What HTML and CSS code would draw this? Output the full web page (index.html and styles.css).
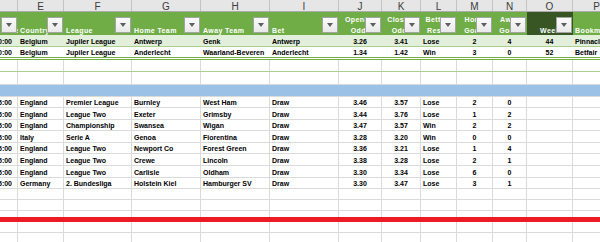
FILE: index.html
```html
<!DOCTYPE html>
<html>
<head>
<meta charset="utf-8">
<link rel="stylesheet" href="styles.css">
</head>
<body>
<div class="sheet">
  <div class="row letters">
    <div class="c"></div><div class="c">E</div><div class="c">F</div><div class="c">G</div><div class="c">H</div><div class="c">I</div><div class="c">J</div><div class="c">K</div><div class="c">L</div><div class="c">M</div><div class="c">N</div><div class="c">O</div><div class="c">P</div>
  </div>
  <div class="row hdr">
    <div class="c h"><span class="ht">Date</span><span class="fb"></span></div>
    <div class="c h"><span class="ht">Country</span><span class="fb"></span></div>
    <div class="c h"><span class="ht">League</span><span class="fb"></span></div>
    <div class="c h"><span class="ht">Home Team</span><span class="fb"></span></div>
    <div class="c h"><span class="ht">Away Team</span><span class="fb"></span></div>
    <div class="c h"><span class="ht">Bet</span><span class="fb"></span></div>
    <div class="c h hc"><span class="ht">Opening<br>Odds</span><span class="fb"></span></div>
    <div class="c h hc"><span class="ht">Closing<br>Odds</span><span class="fb"></span></div>
    <div class="c h hc"><span class="ht">Betting<br>Result</span><span class="fb"></span></div>
    <div class="c h hc"><span class="ht">Home<br>Goals</span><span class="fb"></span></div>
    <div class="c h hc"><span class="ht">Away<br>Goals</span><span class="fb"></span></div>
    <div class="c h hc dk"><span class="ht">Week</span><span class="fb"></span></div>
    <div class="c h"><span class="ht">Bookmaker</span></div>
  </div>
  <div class="row t1 h12">
    <div class="c d">20:00</div><div class="c">Belgium</div><div class="c">Jupiler League</div><div class="c">Antwerp</div><div class="c">Genk</div><div class="c">Antwerp</div><div class="c m">3.26</div><div class="c m">3.41</div><div class="c">Lose</div><div class="c m">2</div><div class="c m">4</div><div class="c m">44</div><div class="c">Pinnacle</div>
  </div>
  <div class="row t2">
    <div class="c d">20:00</div><div class="c">Belgium</div><div class="c">Jupiler League</div><div class="c">Anderlecht</div><div class="c">Waarland-Beveren</div><div class="c">Anderlecht</div><div class="c m">1.34</div><div class="c m">1.42</div><div class="c">Win</div><div class="c m">3</div><div class="c m">0</div><div class="c m">52</div><div class="c">Betfair</div>
  </div>
  <div class="row h12 gl">
    <div class="c"></div><div class="c"></div><div class="c"></div><div class="c"></div><div class="c"></div><div class="c"></div><div class="c"></div><div class="c"></div><div class="c"></div><div class="c"></div><div class="c"></div><div class="c"></div><div class="c"></div>
  </div>
  <div class="row h13">
    <div class="c"></div><div class="c"></div><div class="c"></div><div class="c"></div><div class="c"></div><div class="c"></div><div class="c"></div><div class="c"></div><div class="c"></div><div class="c"></div><div class="c"></div><div class="c"></div><div class="c"></div>
  </div>
  <div class="row h12 blue">
    <div class="c"></div><div class="c"></div><div class="c"></div><div class="c"></div><div class="c"></div><div class="c"></div><div class="c"></div><div class="c"></div><div class="c"></div><div class="c"></div><div class="c"></div><div class="c"></div><div class="c"></div>
  </div>
  <div class="row h11">
    <div class="c d">15:00</div><div class="c">England</div><div class="c">Premier League</div><div class="c">Burnley</div><div class="c">West Ham</div><div class="c">Draw</div><div class="c m">3.46</div><div class="c m">3.57</div><div class="c">Lose</div><div class="c m">2</div><div class="c m">0</div><div class="c"></div><div class="c"></div>
  </div>
  <div class="row h12">
    <div class="c d">15:00</div><div class="c">England</div><div class="c">League Two</div><div class="c">Exeter</div><div class="c">Grimsby</div><div class="c">Draw</div><div class="c m">3.44</div><div class="c m">3.76</div><div class="c">Lose</div><div class="c m">1</div><div class="c m">2</div><div class="c"></div><div class="c"></div>
  </div>
  <div class="row h11">
    <div class="c d">15:00</div><div class="c">England</div><div class="c">Championship</div><div class="c">Swansea</div><div class="c">Wigan</div><div class="c">Draw</div><div class="c m">3.47</div><div class="c m">3.57</div><div class="c">Win</div><div class="c m">2</div><div class="c m">2</div><div class="c"></div><div class="c"></div>
  </div>
  <div class="row h12">
    <div class="c d">15:00</div><div class="c">Italy</div><div class="c">Serie A</div><div class="c">Genoa</div><div class="c">Fiorentina</div><div class="c">Draw</div><div class="c m">3.28</div><div class="c m">3.20</div><div class="c">Win</div><div class="c m">0</div><div class="c m">0</div><div class="c"></div><div class="c"></div>
  </div>
  <div class="row h11">
    <div class="c d">15:00</div><div class="c">England</div><div class="c">League Two</div><div class="c">Newport Co</div><div class="c">Forest Green</div><div class="c">Draw</div><div class="c m">3.36</div><div class="c m">3.21</div><div class="c">Lose</div><div class="c m">1</div><div class="c m">4</div><div class="c"></div><div class="c"></div>
  </div>
  <div class="row h12">
    <div class="c d">15:00</div><div class="c">England</div><div class="c">League Two</div><div class="c">Crewe</div><div class="c">Lincoln</div><div class="c">Draw</div><div class="c m">3.38</div><div class="c m">3.28</div><div class="c">Lose</div><div class="c m">2</div><div class="c m">1</div><div class="c"></div><div class="c"></div>
  </div>
  <div class="row h12">
    <div class="c d">15:00</div><div class="c">England</div><div class="c">League Two</div><div class="c">Carlisle</div><div class="c">Oldham</div><div class="c">Draw</div><div class="c m">3.30</div><div class="c m">3.34</div><div class="c">Lose</div><div class="c m">6</div><div class="c m">0</div><div class="c"></div><div class="c"></div>
  </div>
  <div class="row h11">
    <div class="c d">15:00</div><div class="c">Germany</div><div class="c">2. Bundesliga</div><div class="c">Holstein Kiel</div><div class="c">Hamburger SV</div><div class="c">Draw</div><div class="c m">3.30</div><div class="c m">3.47</div><div class="c">Lose</div><div class="c m">3</div><div class="c m">1</div><div class="c"></div><div class="c"></div>
  </div>
  <div class="row h11">
    <div class="c"></div><div class="c"></div><div class="c"></div><div class="c"></div><div class="c"></div><div class="c"></div><div class="c"></div><div class="c"></div><div class="c"></div><div class="c"></div><div class="c"></div><div class="c"></div><div class="c"></div>
  </div>
  <div class="row h11">
    <div class="c"></div><div class="c"></div><div class="c"></div><div class="c"></div><div class="c"></div><div class="c"></div><div class="c"></div><div class="c"></div><div class="c"></div><div class="c"></div><div class="c"></div><div class="c"></div><div class="c"></div>
  </div>
  <div class="row red">
    <div class="c"></div><div class="c"></div><div class="c"></div><div class="c"></div><div class="c"></div><div class="c"></div><div class="c"></div><div class="c"></div><div class="c"></div><div class="c"></div><div class="c"></div><div class="c"></div><div class="c"></div>
  </div>
  <div class="row h11">
    <div class="c"></div><div class="c"></div><div class="c"></div><div class="c"></div><div class="c"></div><div class="c"></div><div class="c"></div><div class="c"></div><div class="c"></div><div class="c"></div><div class="c"></div><div class="c"></div><div class="c"></div>
  </div>
  <div class="row h11">
    <div class="c"></div><div class="c"></div><div class="c"></div><div class="c"></div><div class="c"></div><div class="c"></div><div class="c"></div><div class="c"></div><div class="c"></div><div class="c"></div><div class="c"></div><div class="c"></div><div class="c"></div>
  </div>
</div>
</body>
</html>
```

FILE: styles.css
```css
html, body {
  margin: 0;
  padding: 0;
  background: #ffffff;
}
body {
  width: 600px;
  height: 242px;
  overflow: hidden;
  font-family: "Liberation Sans", Arial, sans-serif;
}
.sheet {
  width: 621px;
}
.row {
  display: grid;
  grid-template-columns: 18px 46px 68px 69px 69px 69px 43px 39px 36px 36px 34px 46px 48px;
  box-sizing: border-box;
  border-bottom: 1px solid #dadada;
}
.c {
  box-sizing: border-box;
  border-right: 1px solid #dadada;
  overflow: hidden;
  white-space: nowrap;
  display: flex;
  align-items: flex-end;
  padding: 0 2px;
  font-size: 7px;
  font-weight: bold;
  line-height: 8px;
  color: #000000;
}
.m {
  justify-content: center;
}
.d {
  justify-content: flex-end;
  padding-right: 5px;
}
.h11 { height: 11px; }
.h12 { height: 12px; }
.h13 { height: 13px; }

.letters {
  height: 12px;
  background: #e6e6e6;
  border-bottom: 1px solid #ababab;
}
.letters .c {
  justify-content: center;
  padding: 0;
  font-size: 10px;
  font-weight: normal;
  line-height: 8px;
  color: #3c3c3c;
  border-right-color: #c4c4c4;
}

.hdr {
  height: 23px;
  background: #70ad47;
  border-bottom: none;
}
.h {
  position: relative;
  border-right: none;
  color: #ffffff;
  line-height: 11px;
  letter-spacing: 0.4px;
}
.ht {
  display: block;
  margin-bottom: -1px;
}
.hc {
  justify-content: center;
}
.hc .ht {
  text-align: center;
}
.dk {
  background: #375623;
}
.fb {
  position: absolute;
  right: 1px;
  top: 5px;
  width: 16px;
  height: 16px;
  box-sizing: border-box;
  border: 1px solid #a3a3a3;
  background: linear-gradient(#fbfbfb, #e9e9e9);
  display: flex;
  align-items: center;
  justify-content: center;
}
.fb::after {
  content: "";
  width: 0;
  height: 0;
  border-left: 3.5px solid transparent;
  border-right: 3.5px solid transparent;
  border-top: 4px solid #5e5e5e;
}

.t1 {
  background: #e2efda;
  border-bottom-color: #a9d08e;
}
.t1 .c { border-right-color: transparent; }
.t2 {
  height: 13px;
  background: #ffffff;
  border-bottom: 3px double #70ad47;
}
.t2 .c { border-right-color: transparent; }
.gl {
  border-bottom-color: #a9d08e;
}
.blue {
  background: #9bc2e6;
}
.blue .c { border-right-color: transparent; }
.red {
  height: 11px;
  border-bottom: 5px solid #ed1c24;
}
```
